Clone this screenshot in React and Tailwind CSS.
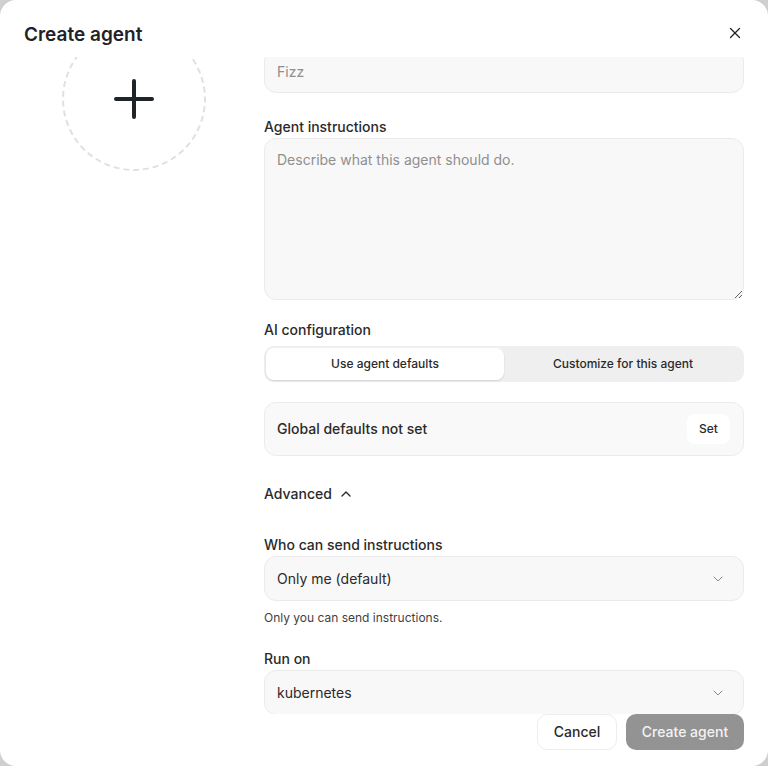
import React from 'react'
import { X, ChevronDown, ChevronUp } from 'lucide-react'

const font = { fontFamily: 'Inter, "Noto Sans", sans-serif' }

function Label({ children, className = '' }) {
  return <div className={`text-sm font-medium leading-5 text-[#2a2a2a] ${className}`}>{children}</div>
}

function SelectBox({ value }) {
  return (
    <div className="flex h-[45px] items-center justify-between rounded-xl border border-[#ebebeb] bg-[#f8f8f8] pl-[12px] pr-[17px] text-sm text-[#2a2a2a]">
      <span>{value}</span>
      <ChevronDown size={16} strokeWidth={1.5} className="text-[#8a8a8a]" />
    </div>
  )
}

export default function App() {
  return (
    <div className="h-[766px] w-[768px] bg-[#cfcfcf]" style={font}>
      <div className="flex h-full flex-col overflow-hidden rounded-2xl bg-white">
        {/* header */}
        <div className="flex h-[57px] shrink-0 items-center justify-between pl-6 pr-[24px] pt-[13px]">
          <h1 className="text-[19px] font-semibold text-[#1f2328]">Create agent</h1>
          <button className="-mt-1 text-[#1f2328]">
            <X size={18} strokeWidth={1.75} />
          </button>
        </div>

        {/* body, scrolled past the name label */}
        <div className="relative flex-1 overflow-hidden">
          <div className="-mt-[29px] grid grid-cols-[220px_1fr] gap-5 pl-6 pr-6">
            <div className="flex justify-center">
              <button className="-mt-px flex h-[144px] w-[144px] items-center justify-center rounded-full border-2 border-dashed border-[#e0e0e0]">
                <svg width="40" height="40" viewBox="0 0 40 40" fill="none" stroke="#1f2428" strokeWidth="4" strokeLinecap="round">
                  <path d="M20 2v36M2 20h36" />
                </svg>
              </button>
            </div>

            <div className="flex flex-col">
              <input
                placeholder="Fizz"
                className="mt-[21px] h-[44px] rounded-xl border border-[#ebebeb] bg-[#f8f8f8] px-[12px] text-sm text-[#2a2a2a] outline-none placeholder:text-[#8f8f8f]"
              />

              <Label className="mt-6">Agent instructions</Label>
              <textarea
                placeholder="Describe what this agent should do."
                className="mt-px block h-[162px] resize-y rounded-xl border border-[#ebebeb] bg-[#f8f8f8] px-[12px] pt-[11px] text-sm leading-5 text-[#2a2a2a] outline-none placeholder:text-[#8f8f8f]"
              />

              <Label className="mt-5">AI configuration</Label>
              <div className="mt-1.5 grid h-[36px] grid-cols-2 rounded-[10px] bg-[#efefef] p-0.5 text-xs font-medium text-[#2a2a2a]">
                <button className="rounded-lg bg-white shadow-[0_1px_2px_rgba(0,0,0,0.12)]">Use agent defaults</button>
                <button>Customize for this agent</button>
              </div>

              <div className="mt-5 flex h-[54px] items-center justify-between rounded-xl border border-[#ececec] bg-[#f9f9f9] pl-[12px] pr-[13px]">
                <span className="text-sm font-medium text-[#2a2a2a]">Global defaults not set</span>
                <button className="h-[30px] w-[43px] rounded-lg bg-white text-xs font-medium text-[#2a2a2a]">Set</button>
              </div>

              <button className="mt-[28px] flex items-center gap-1.5 text-sm font-medium leading-5 text-[#2a2a2a]">
                Advanced
                <ChevronUp size={16} strokeWidth={2} />
              </button>

              <Label className="mt-[31px]">Who can send instructions</Label>
              <div className="mt-px">
                <SelectBox value="Only me (default)" />
              </div>
              <p className="mt-[9px] text-xs leading-4 text-[#3f3f3f]">Only you can send instructions.</p>

              <Label className="mt-[23px]">Run on</Label>
              <div className="mt-px">
                <SelectBox value="kubernetes" />
              </div>
            </div>
          </div>
        </div>

        {/* footer */}
        <div className="flex h-[52px] shrink-0 items-start justify-end gap-[9px] pr-6">
          <button className="h-[36px] w-[80px] rounded-[10px] border border-[#ededed] bg-white text-sm font-medium text-[#2a2a2a]">
            Cancel
          </button>
          <button className="h-[36px] w-[118px] rounded-[10px] bg-[#939393] text-sm font-medium text-[#f2f2f2]">
            Create agent
          </button>
        </div>
      </div>
    </div>
  )
}
